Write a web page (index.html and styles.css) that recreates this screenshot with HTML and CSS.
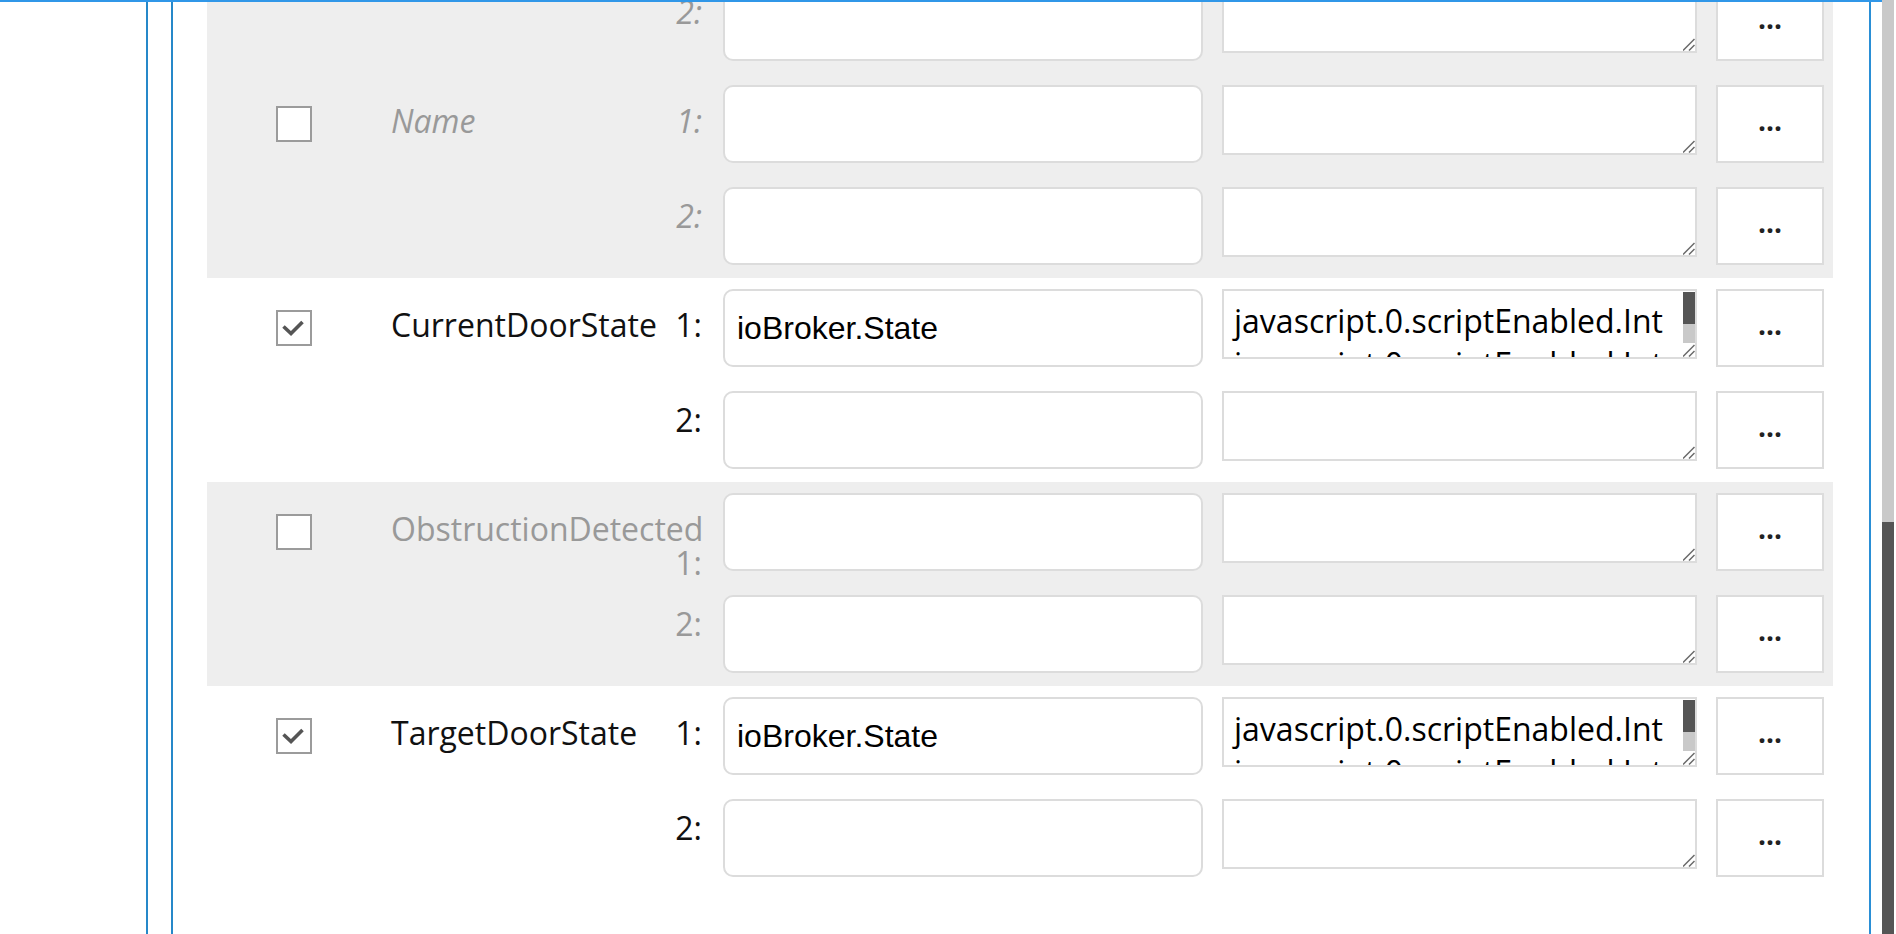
FILE: index.html
```html
<!DOCTYPE html>
<html lang="en">
<head>
<meta charset="utf-8">
<title>Characteristics</title>
<link rel="stylesheet" href="styles.css">
</head>
<body>
<div class="main">
  <div class="frame">
    <div class="panel">
      <div class="list">

        <div class="row off">
          <span class="cb"></span>
          <div class="name italic"><span class="txt">Manufacturer</span><span class="num">1:</span></div>
          <input class="field" value="">
          <div class="ids-box"><textarea class="ids"></textarea><span class="sbar"><span class="sfill"></span><span class="corner"><svg width="12" height="14" viewBox="0 0 12 14"><path d="M0 13.5L11.5 2M6 13.5L11.5 8" stroke="#6a6a6a" stroke-width="1.5" fill="none"/></svg></span></span></div>
          <button class="more">...</button>
          <span></span>
          <div class="lab2 italic">2:</div>
          <input class="field" value="">
          <div class="ids-box"><textarea class="ids"></textarea><span class="sbar"><span class="sfill"></span><span class="corner"><svg width="12" height="14" viewBox="0 0 12 14"><path d="M0 13.5L11.5 2M6 13.5L11.5 8" stroke="#6a6a6a" stroke-width="1.5" fill="none"/></svg></span></span></div>
          <button class="more">...</button>
        </div>

        <div class="row off">
          <span class="cb"></span>
          <div class="name italic"><span class="txt">Name</span><span class="num">1:</span></div>
          <input class="field" value="">
          <div class="ids-box"><textarea class="ids"></textarea><span class="sbar"><span class="sfill"></span><span class="corner"><svg width="12" height="14" viewBox="0 0 12 14"><path d="M0 13.5L11.5 2M6 13.5L11.5 8" stroke="#6a6a6a" stroke-width="1.5" fill="none"/></svg></span></span></div>
          <button class="more">...</button>
          <span></span>
          <div class="lab2 italic">2:</div>
          <input class="field" value="">
          <div class="ids-box"><textarea class="ids"></textarea><span class="sbar"><span class="sfill"></span><span class="corner"><svg width="12" height="14" viewBox="0 0 12 14"><path d="M0 13.5L11.5 2M6 13.5L11.5 8" stroke="#6a6a6a" stroke-width="1.5" fill="none"/></svg></span></span></div>
          <button class="more">...</button>
        </div>

        <div class="row">
          <span class="cb"><svg width="32" height="32" viewBox="0 0 32 32"><path d="M5.5 14.5l7.5 7 11.5-11.5" stroke="#555" stroke-width="3.6" fill="none"/></svg></span>
          <div class="name"><span class="txt">CurrentDoorState</span><span class="num">1:</span></div>
          <input class="field" value="ioBroker.State">
          <div class="ids-box"><textarea class="ids">javascript.0.scriptEnabled.Int
javascript.0.scriptEnabled.Int</textarea><span class="sbar"><span class="sthumb"></span><span class="strack"></span><span class="corner"><svg width="12" height="14" viewBox="0 0 12 14"><path d="M0 13.5L11.5 2M6 13.5L11.5 8" stroke="#6a6a6a" stroke-width="1.5" fill="none"/></svg></span></span></div>
          <button class="more">...</button>
          <span></span>
          <div class="lab2">2:</div>
          <input class="field" value="">
          <div class="ids-box"><textarea class="ids"></textarea><span class="sbar"><span class="sfill"></span><span class="corner"><svg width="12" height="14" viewBox="0 0 12 14"><path d="M0 13.5L11.5 2M6 13.5L11.5 8" stroke="#6a6a6a" stroke-width="1.5" fill="none"/></svg></span></span></div>
          <button class="more">...</button>
        </div>

        <div class="row off">
          <span class="cb"></span>
          <div class="name"><span class="txt">ObstructionDetected</span><span class="num">1:</span></div>
          <input class="field" value="">
          <div class="ids-box"><textarea class="ids"></textarea><span class="sbar"><span class="sfill"></span><span class="corner"><svg width="12" height="14" viewBox="0 0 12 14"><path d="M0 13.5L11.5 2M6 13.5L11.5 8" stroke="#6a6a6a" stroke-width="1.5" fill="none"/></svg></span></span></div>
          <button class="more">...</button>
          <span></span>
          <div class="lab2">2:</div>
          <input class="field" value="">
          <div class="ids-box"><textarea class="ids"></textarea><span class="sbar"><span class="sfill"></span><span class="corner"><svg width="12" height="14" viewBox="0 0 12 14"><path d="M0 13.5L11.5 2M6 13.5L11.5 8" stroke="#6a6a6a" stroke-width="1.5" fill="none"/></svg></span></span></div>
          <button class="more">...</button>
        </div>

        <div class="row">
          <span class="cb"><svg width="32" height="32" viewBox="0 0 32 32"><path d="M5.5 14.5l7.5 7 11.5-11.5" stroke="#555" stroke-width="3.6" fill="none"/></svg></span>
          <div class="name"><span class="txt">TargetDoorState</span><span class="num">1:</span></div>
          <input class="field" value="ioBroker.State">
          <div class="ids-box"><textarea class="ids">javascript.0.scriptEnabled.Int
javascript.0.scriptEnabled.Int</textarea><span class="sbar"><span class="sthumb"></span><span class="strack"></span><span class="corner"><svg width="12" height="14" viewBox="0 0 12 14"><path d="M0 13.5L11.5 2M6 13.5L11.5 8" stroke="#6a6a6a" stroke-width="1.5" fill="none"/></svg></span></span></div>
          <button class="more">...</button>
          <span></span>
          <div class="lab2">2:</div>
          <input class="field" value="">
          <div class="ids-box"><textarea class="ids"></textarea><span class="sbar"><span class="sfill"></span><span class="corner"><svg width="12" height="14" viewBox="0 0 12 14"><path d="M0 13.5L11.5 2M6 13.5L11.5 8" stroke="#6a6a6a" stroke-width="1.5" fill="none"/></svg></span></span></div>
          <button class="more">...</button>
        </div>

      </div>
    </div>
  </div>
</div>
<div class="vscroll"><div class="thumb"></div></div>
<div class="edge"></div>
</body>
</html>
```
FILE: styles.css
```css
* { box-sizing: border-box; }
html, body { margin: 0; padding: 0; }
body {
  display: flex;
  height: 934px;
  overflow: hidden;
  background: #fff;
  font-family: "Open Sans", "DejaVu Sans", sans-serif;
}
.main {
  flex: 1;
  min-width: 0;
  display: flex;
  border-top: 2px solid #3097e8;
  overflow: hidden;
}
.frame {
  flex: none;
  width: 1725px;
  margin-left: 146px;
  padding-left: 23px;
  border-left: 2px solid #2688c9;
  border-right: 2px solid #2a8fd6;
  display: flex;
}
.panel {
  flex: 1;
  min-width: 0;
  border-left: 2px solid #2688c9;
  padding: 0 36px 0 34px;
  overflow: hidden;
}
.list { margin-top: -132px; }
.row {
  display: grid;
  grid-template-columns: 36px 373px 480px 475px 108px;
  grid-template-rows: 78px 78px;
  column-gap: 19px;
  row-gap: 24px;
  padding: 11px 9px 13px 69px;
}
.row.off { background: #eeeeee; }
.cb {
  align-self: center;
  width: 36px;
  height: 36px;
  border: 2px solid #9b9b9b;
  background: #fff;
  display: flex;
}
.name {
  display: flex;
  flex-wrap: wrap;
  align-content: flex-start;
  padding: 19px 2px 0 60px;
  font-size: 32px;
  line-height: 34px;
  color: #111;
  white-space: nowrap;
}
.name .num { margin-left: auto; padding-left: 8px; }
.lab2 {
  padding: 12px 2px 0 0;
  text-align: right;
  font-size: 32px;
  line-height: 34px;
  color: #111;
}
.off .name, .off .lab2 { color: #999; }
.italic { font-style: italic; }
.field {
  width: 100%;
  height: 78px;
  margin: 0;
  border: 2px solid #dcdcdc;
  border-radius: 10px;
  padding: 1px 12px 0 12px;
  font: 32px "Liberation Sans", Arial, sans-serif;
  color: #000;
  background: #fff;
  outline: none;
}
.ids-box {
  align-self: start;
  height: 70px;
  display: flex;
  border: 2px solid #dcdcdc;
  background: #fff;
}
.ids {
  flex: 1;
  min-width: 0;
  height: 100%;
  margin: 0;
  border: 0;
  padding: 8px 10px 0 10px;
  font: 32px "Open Sans", sans-serif;
  color: #000;
  background: #fff;
  outline: none;
  overflow: hidden;
  resize: none;
}
.sbar {
  flex: none;
  width: 12px;
  margin-top: 1px;
  display: flex;
  flex-direction: column;
}
.sthumb { height: 32px; background: #555; }
.strack { flex: 1; background: #c9c9c9; }
.sfill { flex: 1; }
.corner { height: 14px; display: flex; }
.more {
  height: 78px;
  margin: 0;
  padding: 0 0 8px 0;
  border: 2px solid #dcdcdc;
  border-radius: 0;
  background: #fff;
  font: 700 28px "Open Sans", sans-serif;
  color: #222;
}
.vscroll {
  flex: none;
  width: 12px;
  background: #c9c9c9;
  display: flex;
  flex-direction: column;
}
.vscroll .thumb {
  flex: 1;
  margin-top: 522px;
  background: #555;
}
.edge { flex: none; width: 2px; }
```
